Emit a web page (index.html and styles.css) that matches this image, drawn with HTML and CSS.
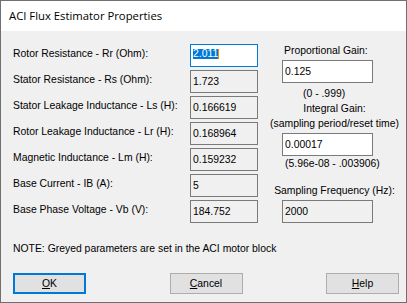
FILE: index.html
```html
<!DOCTYPE html>
<html lang="en">
<head>
    <meta charset="UTF-8">
    <title>ACI Flux Estimator Properties</title>
    <link rel="stylesheet" href="styles.css">
</head>
<body>

<div class="window">
    <div class="titlebar">ACI Flux Estimator Properties</div>

    <div class="client">
        <div class="main">
            <div class="params">
                <div class="param-label">Rotor Resistance - Rr (Ohm):</div>
                <div class="field focused"><span class="selected">2.011</span><span class="caret"></span></div>

                <div class="param-label">Stator Resistance - Rs (Ohm):</div>
                <div class="field">1.723</div>

                <div class="param-label">Stator Leakage Inductance - Ls (H):</div>
                <div class="field">0.166619</div>

                <div class="param-label">Rotor Leakage Inductance - Lr (H):</div>
                <div class="field">0.168964</div>

                <div class="param-label">Magnetic Inductance - Lm (H):</div>
                <div class="field">0.159232</div>

                <div class="param-label">Base Current - IB (A):</div>
                <div class="field">5</div>

                <div class="param-label">Base Phase Voltage - Vb (V):</div>
                <div class="field">184.752</div>
            </div>

            <div class="gains">
                <div class="prop-label">Proportional Gain:</div>
                <div class="field wide">0.125</div>
                <div class="range-prop">(0 - .999)</div>

                <div class="centered int-label">Integral Gain:</div>
                <div class="centered int-sub">(sampling period/reset time)</div>
                <div class="field wide">0.00017</div>
                <div class="range-int">(5.96e-08 - .003906)</div>

                <div class="centered freq-label">Sampling Frequency (Hz):</div>
                <div class="field wide disabled">2000</div>
            </div>
        </div>

        <div class="note">NOTE: Greyed parameters are set in the ACI motor block</div>

        <div class="buttons">
            <button class="btn default"><u>O</u>K</button>
            <button class="btn"><u>C</u>ancel</button>
            <button class="btn"><u>H</u>elp</button>
        </div>
    </div>
</div>

</body>
</html>
```

FILE: styles.css
```css
body {
    margin: 0;
    padding: 0;
    font-family: "Liberation Sans", Arial, sans-serif;
    font-size: 10.4px;
    color: #000;
}

.window {
    width: 407px;
    height: 303px;
    box-sizing: border-box;
    border: 1px solid #707070;
    display: flex;
    flex-direction: column;
}

.titlebar {
    height: 30px;
    line-height: 30px;
    background-color: #ffffff;
    padding-left: 8px;
    font-family: "Open Sans", "Liberation Sans", sans-serif;
    font-size: 11.3px;
}

.client {
    flex: 1;
    background-color: #f0f0f0;
    padding: 13px 7px 0 12px;
}

.main {
    display: flex;
}

.params {
    display: grid;
    grid-template-columns: 177px 68px;
    grid-auto-rows: 23px;
    row-gap: 3px;
}

.param-label {
    line-height: 20px;
    white-space: nowrap;
}

.field {
    box-sizing: border-box;
    height: 23px;
    border: 1px solid #7a7a7a;
    background-color: #f0f0f0;
    padding-left: 2px;
    line-height: 21px;
    white-space: nowrap;
}

.field.focused {
    border-color: #0078d7;
    background-color: #ffffff;
    display: flex;
    align-items: center;
    padding-bottom: 3px;
}

.selected {
    background-color: #0078d7;
    color: #ffffff;
    line-height: 10px;
}

.caret {
    width: 1px;
    height: 10px;
    background-color: #f7860c;
}

.gains {
    margin-left: 12px;
    width: 130px;
    display: flex;
    flex-direction: column;
    line-height: 13px;
    white-space: nowrap;
}

.field.wide {
    width: 91px;
    margin-left: 12px;
    margin-top: 3px;
    background-color: #ffffff;
    line-height: 21px;
}

.field.wide.disabled {
    background-color: #f0f0f0;
}

.prop-label {
    padding-left: 14px;
}

.centered {
    text-align: center;
}

.range-prop {
    padding-left: 33px;
    margin-top: 4px;
}

.int-label {
    margin-top: 2px;
}

.int-sub {
    margin-top: 2px;
}

.range-int {
    padding-left: 15px;
    margin-top: 1px;
}

.freq-label {
    margin-top: 14px;
}

.note {
    margin-top: 19px;
    line-height: 13px;
}

.buttons {
    margin-top: 18px;
    display: flex;
    justify-content: space-between;
}

.btn {
    width: 73px;
    height: 21px;
    box-sizing: border-box;
    border: 1px solid #adadad;
    background-color: #e1e1e1;
    font-family: "Liberation Sans", Arial, sans-serif;
    font-size: 10.4px;
    color: #000;
    padding: 0;
}

.btn.default {
    border: 2px solid #0078d7;
}
```
